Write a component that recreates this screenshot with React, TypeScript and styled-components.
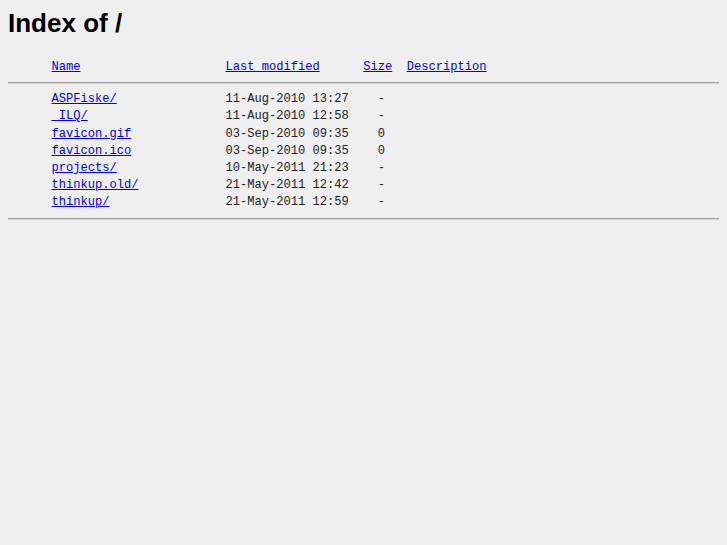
import React from 'react';
import styled, { createGlobalStyle } from 'styled-components';

const GlobalStyle = createGlobalStyle`
  html, body {
    background: #efefef;
  }
  body {
    margin: 8px;
  }
`

const Title = styled.h1`
  margin: 0 0 21px;
  font-family: "Liberation Sans", Arial, sans-serif;
  font-size: 26px;
  font-weight: 700;
  line-height: 30px;
  color: #000;
`

const Listing = styled.pre`
  margin: 0;
  font-family: "Liberation Mono", "Courier New", monospace;
  font-size: 12.08px;
  line-height: 17.2px;
  color: #222;
`

const Rule = styled.hr<{ $after?: number }>`
  margin: 6px 0 ${(p) => p.$after ?? 7}px;
  height: 0;
  border: none;
  border-top: 1px solid #a3a3a3;
  border-bottom: 1px solid #d2d2d2;
`

const Link = styled.a`
  color: #0000ee;
  text-decoration: underline;
`

type Entry = {
  name: string;
  modified: string;
  size: string;
}

const entries: Entry[] = [
  { name: 'ASPFiske/', modified: '11-Aug-2010 13:27', size: '  - ' },
  { name: '_ILQ/', modified: '11-Aug-2010 12:58', size: '  - ' },
  { name: 'favicon.gif', modified: '03-Sep-2010 09:35', size: '  0 ' },
  { name: 'favicon.ico', modified: '03-Sep-2010 09:35', size: '  0 ' },
  { name: 'projects/', modified: '10-May-2011 21:23', size: '  - ' },
  { name: 'thinkup.old/', modified: '21-May-2011 12:42', size: '  - ' },
  { name: 'thinkup/', modified: '21-May-2011 12:59', size: '  - ' },
]

const indent = '      '

const App: React.FC = () => {
  return (
    <>
      <GlobalStyle />
      <Title>Index of /</Title>
      <Listing>
        {indent}<Link href="?C=N;O=D">Name</Link>{' '.repeat(20)}
        <Link href="?C=M;O=A">Last modified</Link>{' '.repeat(6)}
        <Link href="?C=S;O=A">Size</Link>{'  '}
        <Link href="?C=D;O=A">Description</Link>
        <Rule />
        {entries.map((e) => (
          <React.Fragment key={e.name}>
            {indent}<Link href={e.name}>{e.name}</Link>
            {' '.repeat(24 - e.name.length)}{e.modified}{'  '}{e.size}{'\n'}
          </React.Fragment>
        ))}
        <Rule $after={0} />
      </Listing>
    </>
  )
}

export default App;
